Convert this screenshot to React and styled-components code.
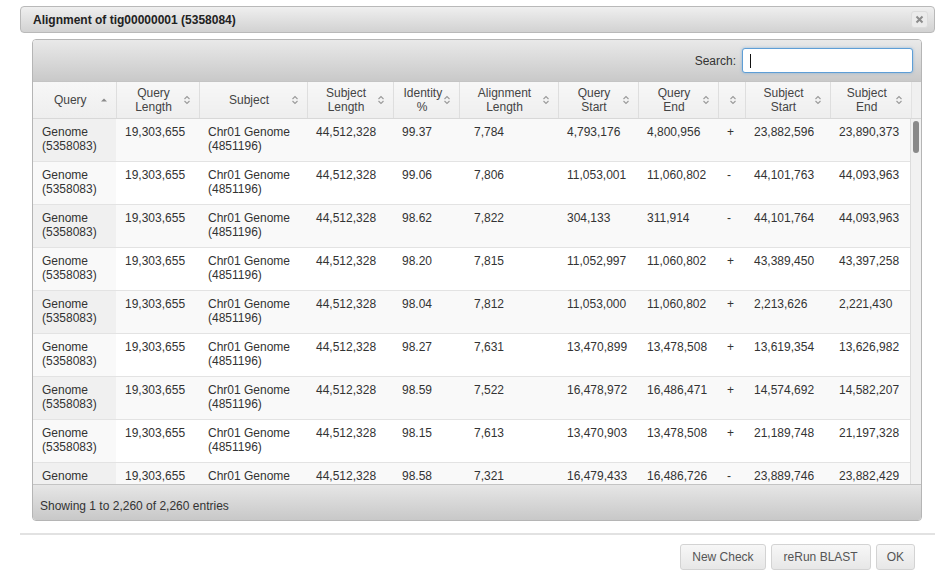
import styled, { createGlobalStyle } from "styled-components";

const GlobalStyle = createGlobalStyle`
  body {
    margin: 0;
    background: #fff;
    font-family: "Liberation Sans", Arial, sans-serif;
    color: #333;
  }
`;

//============================== Dialog ==============================//

const Dialog = styled.div`
  width: 915px;
  margin: 6px 0 0 20px;
`;

const TitleBar = styled.div`
  height: 25px;
  display: flex;
  align-items: center;
  justify-content: space-between;
  padding: 0 6px 0 12px;
  border: 1px solid #b9b9b9;
  border-radius: 4px;
  background: linear-gradient(#efefef, #d2d2d2);
`;

const Title = styled.span`
  font-size: 12px;
  font-weight: bold;
  color: #222;
`;

const CloseButton = styled.button`
  width: 17px;
  height: 17px;
  padding: 0;
  display: flex;
  align-items: center;
  justify-content: center;
  border: 1px solid #dcdcdc;
  border-radius: 3px;
  background: #ebebeb;
  cursor: pointer;
`;

const Content = styled.div`
  padding: 6px 13px 0 12px;
`;

//============================== Table ==============================//

const TableBox = styled.div`
  border: 1px solid #b5b5b5;
  border-radius: 4px;
  overflow: hidden;
`;

const Toolbar = styled.div`
  height: 41px;
  display: flex;
  align-items: center;
  justify-content: flex-end;
  gap: 6px;
  padding-right: 8px;
  border-bottom: 1px solid #c4c4c4;
  background: linear-gradient(#e9e9e9, #c9c9c9);
  font-size: 12px;
  color: #333;
`;

const SearchBox = styled.div`
  position: relative;
  width: 169px;
  height: 23px;
  border: 1px solid #5e9ed6;
  border-radius: 3px;
  background: #fff;
  box-shadow: 0 0 3px rgba(94, 158, 214, 0.6);
`;

const SearchInput = styled.input`
  width: 100%;
  height: 100%;
  box-sizing: border-box;
  border: 0;
  outline: none;
  background: transparent;
  padding: 0 7px;
  font: 12px "Liberation Sans", Arial, sans-serif;
`;

const Caret = styled.span`
  position: absolute;
  left: 7px;
  top: 5px;
  width: 1px;
  height: 14px;
  background: #111;
`;

const Grid = styled.table`
  width: 878px;
  table-layout: fixed;
  border-collapse: collapse;
  font-size: 12px;
  line-height: 14px;
`;

const HeadRow = styled.div`
  display: flex;
  background: #f0f0f0;
  border-bottom: 1px solid #d8d8d8;
`;

const HeadFill = styled.div`
  flex: 1;
  border-left: 1px solid #e2e2e2;
`;

const Th = styled.th`
  position: relative;
  height: 36px;
  padding: 0 18px 0 10px;
  font-weight: normal;
  color: #444;
  text-align: center;
  background: linear-gradient(#f7f7f7, #eeeeee);
  border-left: 1px solid #dedede;

  &:first-child {
    border-left: 0;
  }
`;

const SortIcon = styled.span`
  position: absolute;
  right: 8px;
  top: 50%;
  margin-top: -5px;
  display: flex;
`;

const BodyRow = styled.div`
  display: flex;
  height: 365px;
`;

const Viewport = styled.div`
  width: 878px;
  overflow: hidden;
`;

const Tr = styled.tr`
  background: ${({ $odd }) => ($odd ? "#f9f9f9" : "#fff")};
  border-top: 1px solid #e3e3e3;

  &:first-child {
    border-top: 0;
  }
`;

const Td = styled.td`
  height: 28px;
  padding: 6px 9px 8px;
  vertical-align: top;
  color: #333;
  background: ${({ $sorted, $odd }) =>
    $sorted ? ($odd ? "#f0f0f0" : "#f9f9f9") : "transparent"};
`;

const Track = styled.div`
  flex: 1;
  background: #f1f1f1;
  border-left: 1px solid #dcdcdc;
  padding: 2px 2px 0 2px;
`;

const Thumb = styled.div`
  width: 6px;
  height: 32px;
  border-radius: 3px;
  background: #8a8a8a;
`;

const Footer = styled.div`
  height: 36px;
  box-sizing: border-box;
  padding: 14px 0 0 7px;
  border-top: 1px solid #c4c4c4;
  background: linear-gradient(#e6e6e6, #c8c8c8);
  font-size: 12px;
  color: #333;
`;

//============================== Buttons ==============================//

const ButtonPane = styled.div`
  margin-top: 12px;
  border-top: 2px solid #e2e2e2;
  display: flex;
  justify-content: flex-end;
  gap: 5px;
  padding: 9px 20px 0 0;
`;

const Button = styled.button`
  height: 26px;
  padding: 0 ${({ $pad }) => $pad || 12}px;
  border: 1px solid #d3d3d3;
  border-radius: 3px;
  background: linear-gradient(#f7f7f7, #e7e7e7);
  font: 12px "Liberation Sans", Arial, sans-serif;
  color: #555;
  cursor: pointer;
`;

//============================== Data ==============================//

// head and body widths differ a little, as in the scrolled table
const columns = [
  { label: ["Query"], width: 83, body: 83, sort: "asc" },
  { label: ["Query", "Length"], width: 83, body: 83 },
  { label: ["Subject"], width: 108, body: 108 },
  { label: ["Subject", "Length"], width: 86, body: 86 },
  { label: ["Identity", "%"], width: 66, body: 72 },
  { label: ["Alignment", "Length"], width: 99, body: 93 },
  { label: ["Query", "Start"], width: 80, body: 80 },
  { label: ["Query", "End"], width: 80, body: 80 },
  { label: [""], width: 27, body: 27 },
  { label: ["Subject", "Start"], width: 85, body: 85 },
  { label: ["Subject", "End"], width: 81, body: 81 },
];

const rows = [
  ["99.37", "7,784", "4,793,176", "4,800,956", "+", "23,882,596", "23,890,373"],
  ["99.06", "7,806", "11,053,001", "11,060,802", "-", "44,101,763", "44,093,963"],
  ["98.62", "7,822", "304,133", "311,914", "-", "44,101,764", "44,093,963"],
  ["98.20", "7,815", "11,052,997", "11,060,802", "+", "43,389,450", "43,397,258"],
  ["98.04", "7,812", "11,053,000", "11,060,802", "+", "2,213,626", "2,221,430"],
  ["98.27", "7,631", "13,470,899", "13,478,508", "+", "13,619,354", "13,626,982"],
  ["98.59", "7,522", "16,478,972", "16,486,471", "+", "14,574,692", "14,582,207"],
  ["98.15", "7,613", "13,470,903", "13,478,508", "+", "21,189,748", "21,197,328"],
  ["98.58", "7,321", "16,479,433", "16,486,726", "-", "23,889,746", "23,882,429"],
];

const Cols = ({ part }) => (
  <colgroup>
    {columns.map((c, i) => (
      <col key={i} style={{ width: c[part] }} />
    ))}
  </colgroup>
);

function SortMark({ dir }) {
  if (dir === "asc") {
    return (
      <svg width="8" height="10" viewBox="0 0 8 10">
        <path d="M1 6.5 L4 3.5 L7 6.5 Z" fill="#8a8a8a" />
      </svg>
    );
  }
  return (
    <svg width="8" height="10" viewBox="0 0 8 10">
      <path
        d="M1.5 4 L4 1.5 L6.5 4 M1.5 6 L4 8.5 L6.5 6"
        stroke="#9a9a9a"
        strokeWidth="1.1"
        fill="none"
      />
    </svg>
  );
}

function App() {
  return (
    <>
      <GlobalStyle />
      <Dialog>
        <TitleBar>
          <Title>Alignment of tig00000001 (5358084)</Title>
          <CloseButton aria-label="close">
            <svg width="9" height="9" viewBox="0 0 9 9">
              <path
                d="M1.5 1.5 L7.5 7.5 M7.5 1.5 L1.5 7.5"
                stroke="#8c8c8c"
                strokeWidth="2"
              />
            </svg>
          </CloseButton>
        </TitleBar>

        <Content>
          <TableBox>
            <Toolbar>
              <label>Search:</label>
              <SearchBox>
                <SearchInput type="text" />
                <Caret />
              </SearchBox>
            </Toolbar>

            <HeadRow>
              <Grid>
                <Cols part="width" />
                <thead>
                  <tr>
                    {columns.map((c, i) => (
                      <Th key={i}>
                        {c.label.map((l, j) => (
                          <div key={j}>{l}</div>
                        ))}
                        <SortIcon>
                          <SortMark dir={c.sort} />
                        </SortIcon>
                      </Th>
                    ))}
                  </tr>
                </thead>
              </Grid>
              <HeadFill />
            </HeadRow>

            <BodyRow>
              <Viewport>
                <Grid>
                  <Cols part="body" />
                  <tbody>
                    {rows.map((r, i) => {
                      const odd = i % 2 === 0;
                      return (
                        <Tr key={i} $odd={odd}>
                          <Td $sorted $odd={odd}>
                            Genome
                            <br />
                            (5358083)
                          </Td>
                          <Td>19,303,655</Td>
                          <Td>
                            Chr01 Genome
                            <br />
                            (4851196)
                          </Td>
                          <Td>44,512,328</Td>
                          {r.map((v, j) => (
                            <Td key={j}>{v}</Td>
                          ))}
                        </Tr>
                      );
                    })}
                  </tbody>
                </Grid>
              </Viewport>
              <Track>
                <Thumb />
              </Track>
            </BodyRow>

            <Footer>Showing 1 to 2,260 of 2,260 entries</Footer>
          </TableBox>
        </Content>

        <ButtonPane>
          <Button $pad={11}>New Check</Button>
          <Button>reRun BLAST</Button>
          <Button $pad={10}>OK</Button>
        </ButtonPane>
      </Dialog>
    </>
  );
}

export default App;
